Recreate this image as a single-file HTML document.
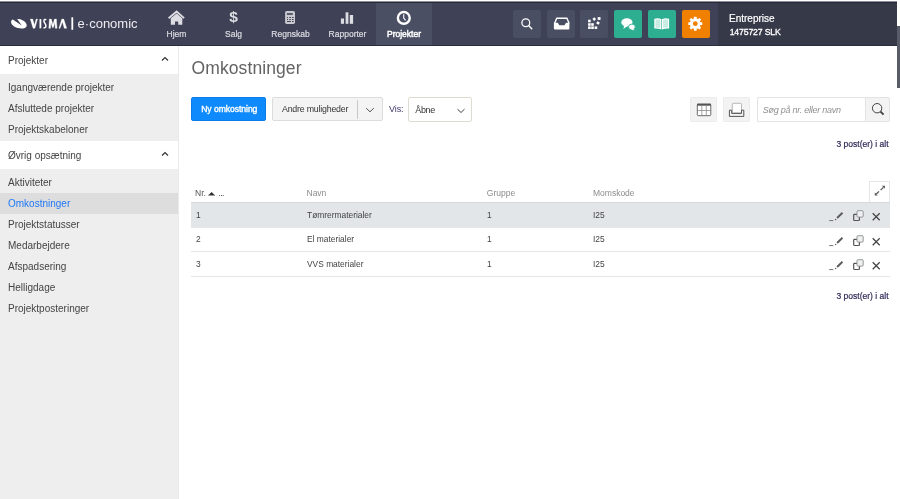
<!DOCTYPE html>
<html><head><meta charset="utf-8">
<style>
*{box-sizing:border-box;margin:0;padding:0}
html,body{width:900px;height:499px;overflow:hidden;background:#fff;will-change:transform;font-family:"Liberation Sans",sans-serif;color:#333}
#nav{position:absolute;left:0;top:1px;width:897px;height:45px;background:#3f4256;border-top:2px solid #2d3041;border-bottom:1px solid #2a2d3c;border-right:1px solid #23263a}
.ni{position:absolute;top:0;width:57px;height:42px;color:#dcdde3;text-align:center;font-size:8.5px;font-weight:normal;-webkit-text-stroke:0.2px currentColor}
.ni .lbl{position:absolute;left:0;right:0;top:25.5px;line-height:10px}
.ni svg{position:absolute;left:0;top:0}
.ni.act{width:56px;background:#4b4f64;color:#fff;-webkit-text-stroke:0.45px #fff}
.ib{position:absolute;top:7px;width:28px;height:28px;border-radius:2px;background:#4a4e63}
.ib svg{position:absolute;left:0;top:0}
.ib.g{background:#2dae91}
.ib.o{background:#f17f00}
#acct{position:absolute;left:718px;top:0;width:179px;height:42px;background:#363a48}
#acct .l1{position:absolute;left:11px;top:9.5px;font-size:10px;line-height:12px;color:#fff;-webkit-text-stroke:0.2px #fff}
#acct .l2{position:absolute;left:11.7px;top:24px;font-size:8.7px;line-height:11px;font-weight:normal;color:#fff;-webkit-text-stroke:0.3px #fff;letter-spacing:-0.15px}
#sb{position:absolute;left:0;top:46px;width:179px;height:453px;background:#eeeeee;border-right:1px solid #e9e9e9}
.sh{position:absolute;left:0;width:178px;height:28px;background:#fff;font-size:10px;color:#444}
.sh span{position:absolute;left:8px;top:9px;line-height:12px}
.sh svg{position:absolute;left:159.6px;top:9.3px}
.si{position:absolute;left:0;width:178px;height:21px;font-size:10px;color:#444}
.si span{position:absolute;left:8px;top:5px;line-height:12px}
.si.act{height:20.5px;background:#dddddd;color:#1f78f6}
#title{position:absolute;left:191px;top:57px;font-size:18px;line-height:22px;color:#555}

#title{position:absolute;left:191.5px;top:56.5px;font-size:17.5px;line-height:22px;color:#636363;letter-spacing:0.1px}
#bny{position:absolute;left:191px;top:97px;width:75px;height:24px;background:#0f8afc;border:1px solid #0a7de9;border-radius:2px;color:#fff;font-size:8.6px;font-weight:normal;-webkit-text-stroke:0.35px #fff;line-height:22px;text-align:center;letter-spacing:-0.05px;padding-left:1.5px}
#band{position:absolute;left:272px;top:97px;width:111px;height:24px;background:#f4f4f4;border:1px solid #dcdcdc;border-radius:2px;font-size:8.8px;color:#333}
#band span{position:absolute;left:9px;top:4.5px;line-height:12px;letter-spacing:-0.2px}
#band .dv{position:absolute;left:84px;top:2px;width:1px;height:19px;background:#c8c8c8}
#band .chev{position:absolute;left:91.5px;top:8.5px}
#vis{position:absolute;left:389px;top:103px;font-size:9px;line-height:12px;color:#3f386a;letter-spacing:-0.1px}
#sel{position:absolute;left:408px;top:97.3px;width:64px;height:24.3px;background:#fff;border:1px solid #dedbd0;border-radius:2px;font-size:9px;color:#333}
#sel span{position:absolute;left:6.3px;top:6px;line-height:12px;letter-spacing:-0.35px}
#sel .chev{position:absolute;left:47.3px;top:10px}
.tb{position:absolute;top:97px;width:26.5px;height:25px;background:#f3f3f3;border-radius:2px;box-shadow:inset 0 0 0 1px #ececec}
.tb svg{position:absolute;left:0;top:0}
#srch{position:absolute;left:757px;top:97px;width:108.3px;height:24.5px;background:#fff;border:1px solid #e3e3e3;border-right:none;border-radius:2px 0 0 2px;font-size:9px;color:#8f8f8f;font-style:italic}
#srch span{position:absolute;left:4.8px;top:5.5px;line-height:12px;letter-spacing:-0.25px}
#sbtn{position:absolute;left:865.3px;top:97px;width:24.7px;height:24.5px;background:#f3f3f3;border:1px solid #e3e3e3;border-radius:0 2px 2px 0}
#sbtn svg{position:absolute;left:0;top:0}
.cnt{position:absolute;left:790px;width:98.5px;text-align:right;font-size:8.5px;line-height:12px;color:#2f2a58;-webkit-text-stroke:0.2px #2f2a58}
.th{position:absolute;top:187.5px;font-size:8.5px;line-height:11px;color:#8c8c8c}
#exp{position:absolute;left:869px;top:181px;width:21px;height:21px;background:#fff;border:1px solid #e6e6e6;border-bottom:none}
#exp svg{position:absolute;left:-1px;top:0}
.row{position:absolute;left:191px;width:699px;height:25px;border-top:1px solid #e6e6e6}
.row.act{background:#e2e6e9;border-top-color:#d5dadd}
.row span{position:absolute;top:5.5px;font-size:9.6px;line-height:12px;color:#444;transform:scaleX(0.875);transform-origin:0 0;white-space:nowrap}
.row .ric{position:absolute;left:638px;top:0}
#rowend{position:absolute;left:191px;top:275.5px;width:699px;height:1px;background:#e6e6e6}
#scroll{position:absolute;left:897px;top:26px;width:3px;height:62px;background:#585c68}
</style></head><body>
<div id="nav">
  <svg style="position:absolute;left:0;top:-3px" width="150" height="45" viewBox="0 0 150 45">
    <g fill="#fff">
      <path d="M21.7 25.6 L17.2 19.1 C20.5 18.9 25.2 20.9 26.5 24.2 C27.3 26.8 25.5 28.5 21.5 28.4 C16.5 28.3 11.6 25.8 11.1 22.4 C10.9 20.8 11.8 19.5 12.8 19.4 Z"/>
      <path stroke="#fff" stroke-width="0.35" d="M30.3 19.1 H32.7 L34.5 25.2 L36.1 19.1 H37.5 L34.9 28.3 H33.1 Z"/>
      <rect x="39.5" y="19.1" width="1.8" height="9.2"/>
      <path d="M46.2 19.9 C45.4 19.2 43.9 19.3 43.9 20.9 C43.9 22.8 45.9 23.6 45.9 26 C45.9 27.8 44.4 28.1 43.5 27.6" stroke="#fff" stroke-width="1.5" fill="none"/>
      <path stroke="#fff" stroke-width="0.35" d="M48.8 28.3 L49.4 19.1 H51.3 L52.9 24.6 L54.5 19.1 H56.4 L57 28.3 H55.3 L54.9 22.4 L53.4 27.6 H52.4 L50.9 22.4 L50.5 28.3 Z"/>
      <path stroke="#fff" stroke-width="0.35" d="M58.9 28.3 L61.8 19.1 H63.7 L66.7 28.3 H64.3 L62.4 21.8 L60.1 28.3 Z"/>
      <rect x="71.4" y="17.3" width="1.8" height="12.5"/>
    </g>
    <text x="77.6" y="27.6" font-family="Liberation Sans" font-size="13" fill="#ececf0">e·conomic</text>
  </svg>
  <div class="ni" style="left:148px">
    <svg width="57" height="42" viewBox="0 0 57 42">
      <path d="M20.6 15.2 L28.6 8.5 L36.1 15.2" stroke="#dcdde2" stroke-width="1.8" fill="none" stroke-linecap="butt"/>
      <path d="M22.8 15.2 L28.6 10.4 L34.3 15.2 V21.7 H30.2 V18.5 H27 V21.7 H22.8 Z" fill="#dcdde2"/>
    </svg>
    <div class="lbl">Hjem</div>
  </div>
  <div class="ni" style="left:205px">
    <svg width="57" height="42" viewBox="0 0 57 42">
      <text x="28.6" y="19.4" text-anchor="middle" font-family="Liberation Sans" font-weight="bold" font-size="15.5" fill="#dcdde2">$</text>
    </svg>
    <div class="lbl">Salg</div>
  </div>
  <div class="ni" style="left:262px">
    <svg width="57" height="42" viewBox="0 0 57 42">
      <rect x="23.1" y="7.9" width="9.9" height="13" rx="1.6" fill="#c9cad0"/>
      <g fill="#3f4256">
        <rect x="24.9" y="10.2" width="5.9" height="1.6"/>
        <rect x="25" y="14" width="1" height="1"/><rect x="27.3" y="14" width="1.6" height="1"/><rect x="30" y="14" width="1.6" height="1"/>
        <rect x="25" y="16" width="1" height="1"/><rect x="27.3" y="16" width="1.6" height="1"/><rect x="30" y="16" width="1.6" height="1"/>
        <rect x="25" y="18" width="3.9" height="1"/><rect x="30" y="18" width="1.6" height="1"/>
      </g>
    </svg>
    <div class="lbl">Regnskab</div>
  </div>
  <div class="ni" style="left:319px">
    <svg width="57" height="42" viewBox="0 0 57 42">
      <g fill="#dcdde2"><rect x="21.9" y="15.5" width="3.1" height="5.3"/><rect x="26.6" y="9.3" width="2.8" height="11.5"/><rect x="30.8" y="12" width="3.3" height="8.8"/></g>
    </svg>
    <div class="lbl">Rapporter</div>
  </div>
  <div class="ni act" style="left:376px">
    <svg width="57" height="42" viewBox="0 0 57 42">
      <circle cx="27.8" cy="14.9" r="5.9" stroke="#fff" stroke-width="2.4" fill="none"/>
      <path d="M27.7 11.2 V15 L29.6 17.3" stroke="#fff" stroke-width="1.1" fill="none"/>
    </svg>
    <div class="lbl">Projekter</div>
  </div>

  <div class="ib" style="left:513px">
    <svg width="28" height="28" viewBox="0 0 28 28">
      <circle cx="12.8" cy="12.7" r="3.9" stroke="#fff" stroke-width="1.3" fill="none"/>
      <path d="M15.6 15.5 L19.2 19.2" stroke="#fff" stroke-width="1.4"/>
    </svg>
  </div>
  <div class="ib" style="left:546.7px">
    <svg width="28" height="28" viewBox="0 0 28 28">
      <path d="M7.6 13.2 L9.8 8.3 H19.9 L22.1 13.2" stroke="#fff" stroke-width="1.4" fill="none"/>
      <path d="M6.9 12.8 H10.8 L12.3 15.2 H17.5 L19 12.8 H22.4 V18.5 Q22.4 19.5 21.4 19.5 H7.9 Q6.9 19.5 6.9 18.5 Z" fill="#fff"/>
    </svg>
  </div>
  <div class="ib" style="left:580.4px">
    <svg width="28" height="28" viewBox="0 0 28 28">
      <g fill="#fff">
        <rect x="8.1" y="9.7" width="2.6" height="2.6"/>
        <rect x="8.1" y="13.2" width="2.6" height="2.6"/><rect x="11.2" y="13.2" width="2.6" height="2.6"/>
        <rect x="8.1" y="16.4" width="2.6" height="2.6"/><rect x="11.2" y="16.4" width="2.6" height="2.6"/><rect x="14.6" y="16.4" width="2.6" height="2.6"/>
        <rect x="12.9" y="7.8" width="2.6" height="2.6" transform="rotate(45 14.2 9.1)"/>
        <rect x="17.7" y="7.1" width="2.8" height="2.8"/>
        <rect x="16.6" y="11.7" width="2.8" height="2.6" transform="rotate(25 18 13)"/>
      </g>
    </svg>
  </div>
  <div class="ib g" style="left:614.1px">
    <svg width="28" height="28" viewBox="0 0 28 28">
      <ellipse cx="12.9" cy="12.4" rx="5.6" ry="4.1" fill="#fff"/>
      <path d="M10.2 15.5 L9.4 18.9 L13.4 16 Z" fill="#fff"/>
      <ellipse cx="17.9" cy="17" rx="3.4" ry="2.9" fill="#fff" stroke="#2dae91" stroke-width="0.9"/>
      <path d="M18.8 18.5 L20.3 20.6 L17.2 19.5 Z" fill="#fff"/>
    </svg>
  </div>
  <div class="ib g" style="left:647.8px">
    <svg width="28" height="28" viewBox="0 0 28 28">
      <path d="M6.9 9.3 Q10 8.5 12.8 9.5 V18.6 Q10 17.7 6.9 17.9 Z" fill="#c2e9de" stroke="#fff" stroke-width="1.2"/>
      <path d="M14.6 9.5 Q17.4 8.5 20.5 9.3 V17.9 Q17.4 17.7 14.6 18.6 Z" fill="#c2e9de" stroke="#fff" stroke-width="1.2"/>
      <path d="M8.3 11.5 H11.4 M8.3 13.5 H11.4 M8.3 15.5 H11.4 M16 11.5 H19.1 M16 13.5 H19.1 M16 15.5 H19.1" stroke="#e3f5f0" stroke-width="0.5"/>
    </svg>
  </div>
  <div class="ib o" style="left:681.5px">
    <svg width="28" height="28" viewBox="0 0 28 28">
      <g transform="translate(13.3 13.7)" fill="#fff">
        <rect x="-1.35" y="-7" width="2.7" height="14" rx="0.5"/>
        <rect x="-1.35" y="-7" width="2.7" height="14" rx="0.5" transform="rotate(45)"/>
        <rect x="-1.35" y="-7" width="2.7" height="14" rx="0.5" transform="rotate(90)"/>
        <rect x="-1.35" y="-7" width="2.7" height="14" rx="0.5" transform="rotate(135)"/>
        <circle r="5.4"/>
      </g>
      <circle cx="13.3" cy="13.7" r="2.4" fill="#f17f00"/>
    </svg>
  </div>
  <div id="acct">
    <div class="l1">Entreprise</div>
    <div class="l2">1475727 SLK</div>
  </div>
</div>
<div id="scroll"></div>
<div style="position:absolute;left:0;top:1px;width:897px;height:1px;background:#8d8f99"></div><div style="position:absolute;left:0;top:2px;width:897px;height:1px;background:#262938"></div>
<div id="sb">
  <div class="sh" style="top:0"><span>Projekter</span><svg width="10" height="8" viewBox="0 0 10 8"><path d="M2 5.5 L5 2.5 L8 5.5" stroke="#333" stroke-width="1.2" fill="none"/></svg></div>
  <div class="si" style="top:31px"><span>Igangværende projekter</span></div>
  <div class="si" style="top:52px"><span>Afsluttede projekter</span></div>
  <div class="si" style="top:73px"><span>Projektskabeloner</span></div>
  <div class="sh" style="top:95px"><span>Øvrig opsætning</span><svg width="10" height="8" viewBox="0 0 10 8"><path d="M2 5.5 L5 2.5 L8 5.5" stroke="#333" stroke-width="1.2" fill="none"/></svg></div>
  <div class="si" style="top:126.4px"><span>Aktiviteter</span></div>
  <div class="si act" style="top:147.4px"><span>Omkostninger</span></div>
  <div class="si" style="top:168.4px"><span>Projektstatusser</span></div>
  <div class="si" style="top:189.4px"><span>Medarbejdere</span></div>
  <div class="si" style="top:210.4px"><span>Afspadsering</span></div>
  <div class="si" style="top:231.4px"><span>Helligdage</span></div>
  <div class="si" style="top:252.4px"><span>Projektposteringer</span></div>
</div>
<div id="title">Omkostninger</div>
<div id="bny">Ny omkostning</div>
<div id="band"><span>Andre muligheder</span><i class="dv"></i><svg class="chev" width="10" height="6" viewBox="0 0 10 6"><path d="M1.2 1.2 L5 4.8 L8.8 1.2" stroke="#555" stroke-width="1" fill="none"/></svg></div>
<div id="vis">Vis:</div>
<div id="sel"><span>Åbne</span><svg class="chev" width="10" height="6" viewBox="0 0 10 6"><path d="M1.5 1.2 L5 4.5 L8.5 1.2" stroke="#444" stroke-width="1" fill="none"/></svg></div>
<div class="tb" style="left:690px">
  <svg width="27" height="25" viewBox="0 0 27 25">
    <rect x="7.3" y="7.2" width="13.5" height="11.5" rx="1" fill="#fff" stroke="#5a5a5a" stroke-width="0.9"/>
    <rect x="7" y="6.7" width="14" height="2" fill="#555"/>
    <path d="M11.8 8.5 V18.5 M16.3 8.5 V18.5 M7.5 13.5 H20.5" stroke="#8a8a8a" stroke-width="0.8"/>
  </svg>
</div>
<div class="tb" style="left:723.3px">
  <svg width="27" height="25" viewBox="0 0 27 25">
    <rect x="9.3" y="6.3" width="9.2" height="9.6" rx="0.8" fill="#fff" stroke="#b0b0b0" stroke-width="0.9"/>
    <path d="M6.4 13.2 V19.4 H20.8 V13.2 H18.5 V16.4 H8.7 V13.2 Z" fill="none" stroke="#555" stroke-width="1" stroke-linejoin="round"/>
  </svg>
</div>
<div id="srch"><span>Søg på nr. eller navn</span></div>
<div id="sbtn"><svg width="25" height="24" viewBox="0 0 25 24"><circle cx="11.1" cy="10.2" r="4.7" stroke="#444" stroke-width="1" fill="none"/><path d="M14.4 13.5 L17.6 16.7" stroke="#444" stroke-width="1.8"/></svg></div>
<div class="cnt" style="top:138px">3 post(er) i alt</div>

<div class="th" style="left:195px;color:#555">Nr.</div><svg style="position:absolute;left:208px;top:192.2px" width="8" height="4" viewBox="0 0 8 4"><path d="M0 3.6 L3.6 0 L7.2 3.6 Z" fill="#333"/></svg><div class="th" style="left:218.5px;color:#444;letter-spacing:-0.6px">...</div>
<div class="th" style="left:306.5px">Navn</div>
<div class="th" style="left:486.8px">Gruppe</div>
<div class="th" style="left:593px">Momskode</div>
<div id="exp"><svg width="20" height="20" viewBox="0 0 20 20"><path d="M14.4 5.3 L11.6 8.1 M7.3 12 L10 9.3" stroke="#555" stroke-width="1.2"/><path d="M15.9 3.8 H12.9 L15.9 6.8 Z M5.8 13.5 H8.8 L5.8 10.5 Z" fill="#555"/></svg></div>

<div class="row act" style="top:202px">
  <span style="left:4.5px">1</span><span style="left:115.5px">Tømrermaterialer</span><span style="left:295.5px">1</span><span style="left:402px">I25</span>
  <svg class="ric" width="60" height="24" viewBox="0 0 60 24">
    <path d="M0.2 17.6 H4.3" stroke="#666" stroke-width="0.9"/>
    <path d="M8.1 15 L13.5 9.7" stroke="#5a5a5a" stroke-width="1.9"/><circle cx="6.6" cy="16.6" r="0.75" fill="#5a5a5a"/>
    <rect x="24.7" y="11.3" width="5.7" height="6.2" rx="0.8" fill="none" stroke="#555" stroke-width="1.2"/><rect x="28" y="7.7" width="6.2" height="6.4" rx="1" fill="#eef0f2" stroke="#8c8c8c" stroke-width="0.9"/>
    <path d="M43.7 10.2 L50.7 17.2 M50.7 10.2 L43.7 17.2" stroke="#444" stroke-width="1.25"/>
  </svg>
</div>
<div class="row" style="top:226.5px">
  <span style="left:4.5px">2</span><span style="left:115.5px">El materialer</span><span style="left:295.5px">1</span><span style="left:402px">I25</span>
  <svg class="ric" width="60" height="24" viewBox="0 0 60 24">
    <path d="M0.2 17.6 H4.3" stroke="#666" stroke-width="0.9"/>
    <path d="M8.1 15 L13.5 9.7" stroke="#5a5a5a" stroke-width="1.9"/><circle cx="6.6" cy="16.6" r="0.75" fill="#5a5a5a"/>
    <rect x="24.7" y="11.3" width="5.7" height="6.2" rx="0.8" fill="none" stroke="#555" stroke-width="1.2"/><rect x="28" y="7.7" width="6.2" height="6.4" rx="1" fill="#eef0f2" stroke="#8c8c8c" stroke-width="0.9"/>
    <path d="M43.7 10.2 L50.7 17.2 M50.7 10.2 L43.7 17.2" stroke="#444" stroke-width="1.25"/>
  </svg>
</div>
<div class="row" style="top:251px">
  <span style="left:4.5px">3</span><span style="left:115.5px">VVS materialer</span><span style="left:295.5px">1</span><span style="left:402px">I25</span>
  <svg class="ric" width="60" height="24" viewBox="0 0 60 24">
    <path d="M0.2 17.6 H4.3" stroke="#666" stroke-width="0.9"/>
    <path d="M8.1 15 L13.5 9.7" stroke="#5a5a5a" stroke-width="1.9"/><circle cx="6.6" cy="16.6" r="0.75" fill="#5a5a5a"/>
    <rect x="24.7" y="11.3" width="5.7" height="6.2" rx="0.8" fill="none" stroke="#555" stroke-width="1.2"/><rect x="28" y="7.7" width="6.2" height="6.4" rx="1" fill="#eef0f2" stroke="#8c8c8c" stroke-width="0.9"/>
    <path d="M43.7 10.2 L50.7 17.2 M50.7 10.2 L43.7 17.2" stroke="#444" stroke-width="1.25"/>
  </svg>
</div>
<div id="rowend"></div>
<div class="cnt" style="top:289.5px">3 post(er) i alt</div>

</body></html>
